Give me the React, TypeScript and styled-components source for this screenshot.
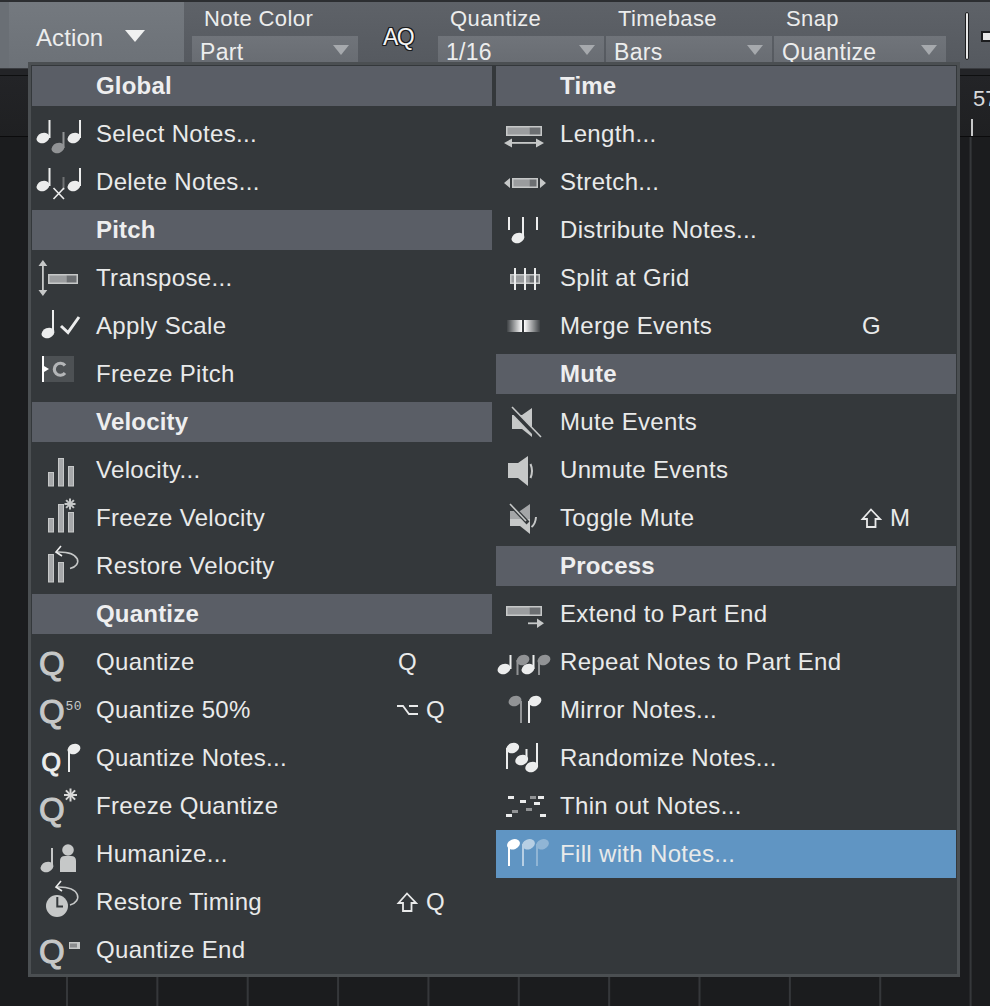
import React from "react";
import styled, { createGlobalStyle } from "styled-components";

const Global = createGlobalStyle`
  html, body { margin: 0; padding: 0; background: #1b1c1e; overflow: hidden; }
  body { font-family: "Liberation Sans", Arial, sans-serif; color: #e9eaea; }
  #root { width: 990px; height: 1006px; }
`;

const Page = styled.div`
  position: relative;
  width: 990px;
  height: 1006px;
  display: flex;
  flex-direction: column;
  overflow: hidden;
  background: #1b1c1e;
  border-top: 2px solid #2c2e31;
  box-sizing: border-box;
`;

const Toolbar = styled.div`
  display: flex;
  height: 67px;
  flex: none;
  background: linear-gradient(#5e6268, #55595f);
  border-bottom: 1px solid #3a3c40;
  box-sizing: border-box;
`;

const ActionButton = styled.div`
  width: 184px;
  flex: none;
  box-sizing: border-box;
  padding: 21px 0 0 27px;
  display: flex;
  align-items: flex-start;
  gap: 22px;
  font-size: 24px;
  line-height: 29px;
  letter-spacing: 0.1px;
  color: #eceded;
  background: linear-gradient(#74797f, #6c7177);
  border-left: 9px solid #6a6f75;
`;

const ActionArrow = styled.span`
  width: 0;
  height: 0;
  margin-top: 7px;
  border-left: 10px solid transparent;
  border-right: 10px solid transparent;
  border-top: 12px solid #f0f1f1;
`;

const FieldGroup = styled.div<{ $wide?: boolean; $first?: boolean }>`
  width: ${(p) => (p.$wide ? 172 : 166)}px;
  margin: 0 2px 0 ${(p) => (p.$first ? 8 : 0)}px;
  flex: none;
`;

const FieldLabel = styled.div`
  height: 34px;
  padding: 3px 0 0 12px;
  box-sizing: border-box;
  font-size: 22px;
  line-height: 27px;
  letter-spacing: 0.4px;
  color: #eceded;
`;

const Field = styled.div`
  height: 32px;
  padding-left: 8px;
  display: flex;
  align-items: center;
  justify-content: space-between;
  background: linear-gradient(#70747a, #676b71);
  font-size: 23px;
  letter-spacing: 0.3px;
  color: #eceded;
  line-height: 30px;
`;

const FieldArrow = styled.span`
  width: 0;
  height: 0;
  margin: 0 9px 4px 0;
  border-left: 8px solid transparent;
  border-right: 8px solid transparent;
  border-top: 10px solid #a6a9ad;
`;

const AQSlot = styled.div`
  width: 80px;
  flex: none;
  margin-left: -2px;
  padding-top: 22px;
  box-sizing: border-box;
  display: flex;
  justify-content: center;
  font-size: 23px;
  font-weight: 400;
  line-height: 26px;
  letter-spacing: -1.5px;
  color: #f4f4f4;
  text-shadow: 1px 0 #1b1c1e, -1px 0 #1b1c1e, 0 1px #1b1c1e, 0 -1px #1b1c1e, 1px 1px #1b1c1e, -1px -1px #1b1c1e, 1px -1px #1b1c1e, -1px 1px #1b1c1e;
`;

const ToolDivider = styled.div`
  width: 2px;
  height: 46px;
  margin: 10px 0 0 17px;
  flex: none;
  background: #e8e8e8;
  border: 1px solid #1c1d1f;
  border-radius: 2px;
`;

const ToolStub = styled.div`
  width: 14px;
  height: 7px;
  margin: 29px 0 0 12px;
  flex: none;
  background: #e8e8e8;
  border: 2px solid #1c1d1f;
`;

const Ruler = styled.div`
  height: 68px;
  flex: none;
  box-sizing: border-box;
  padding: 17px 0 0 971px;
  background: linear-gradient(#232427 0, #232427 6px, #0e0f10 6px, #0e0f10 7px, #232427 7px, #1f2022 100%);
  border-bottom: 1px solid #0b0b0c;
  overflow: hidden;
`;

const RulerMark = styled.div`
  width: 60px;
  padding-left: 2px;
  font-size: 22px;
  line-height: 26px;
  color: #d9dadb;
  white-space: nowrap;
  box-sizing: border-box;
`;

const RulerTick = styled.div`
  width: 2px;
  height: 17px;
  margin-top: 7px;
  background: #c7c8c9;
`;

const Grid = styled.div`
  flex: 1;
  background-color: #1b1c1e;
  background-image: linear-gradient(90deg, #35373a 0, #35373a 2px, transparent 2px);
  background-size: 90.37px 100%;
  background-position: 66px 0;
`;

const Menu = styled.div`
  position: absolute;
  left: 28px;
  top: 60px;
  width: 932px;
  box-sizing: border-box;
  display: flex;
  gap: 4px;
  padding: 1px 1px 0;
  background: #34383b;
  border: 3px solid #4b4f52;
  z-index: 2;
`;

const Column = styled.div`
  width: 460px;
  flex: none;
`;

const Header = styled.div`
  height: 40px;
  margin: 4px 0;
  padding-left: 64px;
  background: #5a5e66;
  font-size: 24px;
  font-weight: 700;
  line-height: 39px;
  letter-spacing: 0.2px;
  color: #eeeeef;
  &:first-child { margin-top: 0; }
`;

const Row = styled.div<{ $active?: boolean }>`
  height: 48px;
  display: grid;
  grid-template-columns: 64px 302px 1fr;
  align-items: center;
  font-size: 24px;
  letter-spacing: 0.33px;
  white-space: nowrap;
  color: #e9eaea;
  background: ${(p) => (p.$active ? "#6095c3" : "transparent")};
`;

const IconSvg = styled.svg`
  display: block;
  width: 64px;
  height: 48px;
`;

const Shortcut = styled.div`
  display: flex;
  align-items: center;
  gap: 8px;
  letter-spacing: 0;
  font-size: 24px;
`;

const ModSvg = styled.svg`
  width: 22px;
  height: 22px;
  margin-left: -2px;
  flex: none;
`;

const LIGHT = "#c6c8c8";
const WHITE = "#eceded";
const GREY = "#919395";

type NoteProps = { hx: number; hy: number; sx: number; y1: number; y2: number; c?: string; o?: number };
const Note = ({ hx, hy, sx, y1, y2, c = WHITE, o = 1 }: NoteProps) => (
  <g opacity={o}>
    <ellipse cx={hx} cy={hy} rx={6.6} ry={5} transform={`rotate(-22 ${hx} ${hy})`} fill={c} />
    <rect x={sx - 1} y={y1} width={2} height={y2 - y1} fill={c} />
  </g>
);

const Bar = ({ x, y, w, h, split }: { x: number; y: number; w: number; h: number; split: number }) => (
  <g>
    <rect x={x} y={y} width={w} height={h} fill={LIGHT} />
    <rect x={x + 1.5} y={y + 1.5} width={split} height={h - 3} fill="#9a9c9e" />
    <rect x={x + 1.5 + split} y={y + 1.5} width={w - 3 - split} height={h - 3} fill="#6c6f72" />
  </g>
);

const Q = ({ x = 7, y = 37, size = 33, c = LIGHT }: { x?: number; y?: number; size?: number; c?: string }) => (
  <text x={x} y={y} fontFamily="'Liberation Sans', sans-serif" fontWeight={400} fontSize={size} fill={c} stroke={c} strokeWidth={1}>Q</text>
);

const BackArrow = ({ d, tx, ty }: { d: string; tx: number; ty: number }) => (
  <g fill="none" stroke={LIGHT} strokeWidth={1.6}>
    <path d={d} />
    <path d={`M${tx + 5} ${ty - 6} L${tx} ${ty} L${tx + 6} ${ty + 4}`} stroke={WHITE} />
  </g>
);

const Star = ({ x, y, r, c = LIGHT }: { x: number; y: number; r: number; c?: string }) => (
  <g stroke={c} strokeWidth={2} strokeLinecap="butt">
    {[0, 45, 90, 135].map((a) => (
      <line key={a} x1={x} y1={y - r} x2={x} y2={y + r} transform={`rotate(${a} ${x} ${y})`} />
    ))}
  </g>
);

const Icon = ({ children }: { children: React.ReactNode }) => (
  <IconSvg viewBox="0 0 64 48">{children}</IconSvg>
);

const icons: Record<string, React.ReactNode> = {
  select: (
    <>
      <Note hx={11} hy={28} sx={17.5} y1={10} y2={28} />
      <Note hx={26} hy={38} sx={31.5} y1={22} y2={38} c={GREY} />
      <Note hx={42} hy={28} sx={48} y1={10} y2={28} />
    </>
  ),
  del: (
    <>
      <Note hx={11} hy={28} sx={17.5} y1={10} y2={28} />
      <rect x={30.5} y={19} width={2} height={13} fill="#6f7173" />
      <path d="M21.5 30 L32 41 M32 30 L21.5 41" stroke={WHITE} strokeWidth={1.6} />
      <Note hx={42} hy={28} sx={48} y1={10} y2={28} />
    </>
  ),
  transpose: (
    <>
      <rect x={10} y={10} width={1.8} height={28} fill={LIGHT} />
      <path d="M6.5 12 L10.9 6 L15.3 12 Z M6.5 36 L10.9 42 L15.3 36 Z" fill={LIGHT} />
      <Bar x={16} y={20} w={30} h={10} split={17} />
    </>
  ),
  scale: (
    <>
      <Note hx={16} hy={31} sx={21} y1={8} y2={31} />
      <path d="M29 24 L36 30.5 L47 15" fill="none" stroke={WHITE} strokeWidth={3} />
    </>
  ),
  freeze: (
    <>
      <rect x={12} y={6} width={30} height={26} fill="#4d5154" />
      <rect x={10} y={6} width={2} height={26} fill="#fff" />
      <path d="M12 16 L17 19 L12 22 Z" fill="#fff" />
      <path d="M33 15.5 A6 6 0 1 0 33 23" fill="none" stroke="#b4b6b8" strokeWidth={3.2} />
    </>
  ),
  velocity: (
    <g fill="#a6a8aa" stroke={LIGHT}>
      <rect x={16.5} y={26.5} width={5} height={13.5} />
      <rect x={26.5} y={12.5} width={5} height={27.5} />
      <rect x={36.5} y={20.5} width={5} height={19.5} />
    </g>
  ),
  freezeVel: (
    <>
      <g fill="#a6a8aa" stroke={LIGHT}>
        <rect x={16.5} y={24.5} width={5} height={13.5} />
        <rect x={26.5} y={10.5} width={5} height={27.5} />
        <rect x={36.5} y={18.5} width={5} height={19.5} />
      </g>
      <Star x={38} y={10} r={5.5} />
    </>
  ),
  restoreVel: (
    <>
      <g fill="#a6a8aa" stroke={LIGHT}>
        <rect x={16.5} y={12.5} width={5} height={27.5} />
        <rect x={26.5} y={20.5} width={5} height={19.5} />
      </g>
      <BackArrow d="M38 26.5 C50 24 50 9 24 10" tx={24} ty={10} />
    </>
  ),
  q: <Q />,
  q50: (
    <>
      <Q />
      <text x={33.5} y={24} fontFamily="'Liberation Mono', monospace" fontWeight={400} fontSize={13} fill={LIGHT}>50</text>
    </>
  ),
  qNotes: (
    <>
      <Q x={9.5} y={37} size={25} c={WHITE} />
      <Note hx={42} hy={15} sx={37} y1={15} y2={38} />
    </>
  ),
  qFreeze: (
    <>
      <Q y={39} />
      <Star x={38.5} y={13} r={6.5} c="#d8d9d9" />
    </>
  ),
  humanize: (
    <>
      <Note hx={15} hy={37} sx={20} y1={18} y2={37} c={LIGHT} />
      <circle cx={36} cy={20} r={5.8} fill={LIGHT} />
      <path d="M28 42 V31 Q28 26 33 26 H39 Q44 26 44 31 V42 Z" fill={LIGHT} />
    </>
  ),
  restoreTime: (
    <>
      <circle cx={25} cy={28} r={11} fill={LIGHT} />
      <path d="M25.3 19 V28.5 H31" fill="none" stroke="#34383b" strokeWidth={2} />
      <BackArrow d="M38 27 C50 24 50 8 24 9" tx={24} ty={9} />
    </>
  ),
  qEnd: (
    <>
      <Q />
      <rect x={37} y={16} width={11} height={7} fill={LIGHT} />
      <rect x={38} y={17.5} width={7} height={4} fill="#8a8c8e" />
    </>
  ),
  length: (
    <>
      <Bar x={10} y={16} w={36} h={10} split={22} />
      <rect x={14} y={32} width={30} height={1.8} fill={LIGHT} />
      <path d="M16 28.5 L8 33 L16 37.5 Z M40 28.5 L48 33 L40 37.5 Z" fill={LIGHT} />
    </>
  ),
  stretch: (
    <>
      <Bar x={16} y={20} w={26} h={10} split={16} />
      <path d="M14 20 L8 25 L14 30 Z M44 20 L50 25 L44 30 Z" fill={LIGHT} />
    </>
  ),
  distribute: (
    <>
      <rect x={12} y={11} width={2} height={13} fill={WHITE} />
      <rect x={40} y={11} width={2} height={13} fill={WHITE} />
      <Note hx={22} hy={32} sx={27} y1={11} y2={32} />
    </>
  ),
  split: (
    <>
      <Bar x={14} y={20} w={30} h={10} split={18} />
      <g fill={WHITE}>
        <rect x={18} y={14} width={2} height={22} />
        <rect x={28} y={14} width={2} height={22} />
        <rect x={38} y={14} width={2} height={22} />
      </g>
    </>
  ),
  merge: (
    <>
      <defs>
        <linearGradient id="mergeL"><stop offset="0" stopColor="#fff" stopOpacity={0.05} /><stop offset="1" stopColor="#fff" /></linearGradient>
        <linearGradient id="mergeR"><stop offset="0" stopColor="#fff" /><stop offset="1" stopColor="#fff" stopOpacity={0.05} /></linearGradient>
      </defs>
      <rect x={11} y={18} width={15} height={12} fill="url(#mergeL)" />
      <rect x={28} y={18} width={16} height={12} fill="url(#mergeR)" />
    </>
  ),
  mute: (
    <>
      <path d="M16 17 H26 L36 10 V39 L26 31 H16 Z" fill={LIGHT} />
      <path d="M14 10 L42 39" stroke="#34383b" strokeWidth={4.5} />
      <path d="M16 9 L45 39" stroke={LIGHT} strokeWidth={1.6} />
    </>
  ),
  unmute: (
    <>
      <path d="M12 17 H22 L32 10 V40 L22 32 H12 Z" fill={LIGHT} />
      <path d="M34.5 18 Q37.5 25 34.5 32" fill="none" stroke={LIGHT} strokeWidth={2} />
    </>
  ),
  toggle: (
    <>
      <path d="M14 17 H24 L34 10 V25 H14 Z" fill="#a4a6a8" />
      <path d="M14 25 H34 V40 L24 32 H14 Z" fill={LIGHT} />
      <path d="M13 9 L32 29" stroke="#34383b" strokeWidth={4} />
      <path d="M14 10 L30 27" stroke={LIGHT} strokeWidth={1.6} />
      <path d="M40 23 Q39.5 30 35.5 33" fill="none" stroke={LIGHT} strokeWidth={2} />
    </>
  ),
  extend: (
    <>
      <Bar x={10} y={16} w={36} h={10} split={22} />
      <rect x={32} y={32.4} width={10} height={1.8} fill={LIGHT} />
      <path d="M41 28.5 L48 33.3 L41 38 Z" fill={LIGHT} />
    </>
  ),
  repeat: (
    <>
      <Note hx={8} hy={31} sx={14.5} y1={17} y2={31} />
      <Note hx={27} hy={22} sx={21.5} y1={22} y2={37} c={GREY} />
      <Note hx={32} hy={31} sx={37.5} y1={17} y2={31} />
      <Note hx={48} hy={22} sx={43} y1={22} y2={37} c={GREY} />
    </>
  ),
  mirror: (
    <>
      <Note hx={19} hy={15} sx={25} y1={15} y2={37} c={GREY} />
      <Note hx={39} hy={15} sx={33} y1={15} y2={37} />
    </>
  ),
  randomize: (
    <>
      <Note hx={16.7} hy={14} sx={11} y1={14} y2={35} />
      <Note hx={25.7} hy={26} sx={30.5} y1={15} y2={26} />
      <Note hx={35.7} hy={33} sx={41} y1={9} y2={33} />
    </>
  ),
  thin: (
    <>
      <g fill={WHITE}>
        {[[12, 14], [24, 18], [42, 14], [38, 20], [10, 32], [44, 32]].map(([x, y]) => (
          <rect key={`${x}-${y}`} x={x} y={y} width={6} height={3} />
        ))}
      </g>
      <g fill={GREY}>
        {[[34, 14], [16, 28], [30, 26]].map(([x, y]) => (
          <rect key={`${x}-${y}`} x={x} y={y} width={6} height={3} />
        ))}
      </g>
    </>
  ),
  fill: (
    <>
      <Note hx={17.5} hy={14.3} sx={13} y1={14} y2={36} c="#fff" />
      <Note hx={32.5} hy={14.3} sx={27} y1={14} y2={36} c="#fff" o={0.55} />
      <Note hx={46.5} hy={14.3} sx={41} y1={14} y2={36} c="#fff" o={0.3} />
    </>
  ),
};

const Option = () => (
  <ModSvg viewBox="0 0 22 22" fill="none" stroke="#e9eaea" strokeWidth={1.8}>
    <path d="M1 7 H7 L13 15 H22 M13 7 H22" />
  </ModSvg>
);

const Shift = () => (
  <ModSvg viewBox="0 0 22 22" fill="none" stroke="#e9eaea" strokeWidth={1.8}>
    <path d="M11 2.5 L20 12 H15.5 V20 H7 V12 H2.5 Z" />
  </ModSvg>
);

type Item = { label: string; icon: string; key?: string; mod?: "opt" | "shift"; active?: boolean };
type Section = { title: string; items: Item[] };

const left: Section[] = [
  { title: "Global", items: [
    { label: "Select Notes...", icon: "select" },
    { label: "Delete Notes...", icon: "del" },
  ] },
  { title: "Pitch", items: [
    { label: "Transpose...", icon: "transpose" },
    { label: "Apply Scale", icon: "scale" },
    { label: "Freeze Pitch", icon: "freeze" },
  ] },
  { title: "Velocity", items: [
    { label: "Velocity...", icon: "velocity" },
    { label: "Freeze Velocity", icon: "freezeVel" },
    { label: "Restore Velocity", icon: "restoreVel" },
  ] },
  { title: "Quantize", items: [
    { label: "Quantize", icon: "q", key: "Q" },
    { label: "Quantize 50%", icon: "q50", key: "Q", mod: "opt" },
    { label: "Quantize Notes...", icon: "qNotes" },
    { label: "Freeze Quantize", icon: "qFreeze" },
    { label: "Humanize...", icon: "humanize" },
    { label: "Restore Timing", icon: "restoreTime", key: "Q", mod: "shift" },
    { label: "Quantize End", icon: "qEnd" },
  ] },
];

const right: Section[] = [
  { title: "Time", items: [
    { label: "Length...", icon: "length" },
    { label: "Stretch...", icon: "stretch" },
    { label: "Distribute Notes...", icon: "distribute" },
    { label: "Split at Grid", icon: "split" },
    { label: "Merge Events", icon: "merge", key: "G" },
  ] },
  { title: "Mute", items: [
    { label: "Mute Events", icon: "mute" },
    { label: "Unmute Events", icon: "unmute" },
    { label: "Toggle Mute", icon: "toggle", key: "M", mod: "shift" },
  ] },
  { title: "Process", items: [
    { label: "Extend to Part End", icon: "extend" },
    { label: "Repeat Notes to Part End", icon: "repeat" },
    { label: "Mirror Notes...", icon: "mirror" },
    { label: "Randomize Notes...", icon: "randomize" },
    { label: "Thin out Notes...", icon: "thin" },
    { label: "Fill with Notes...", icon: "fill", active: true },
  ] },
];

const MenuColumn = ({ sections }: { sections: Section[] }) => (
  <Column>
    {sections.map((s) => (
      <React.Fragment key={s.title}>
        <Header>{s.title}</Header>
        {s.items.map((it) => (
          <Row key={it.label} $active={it.active}>
            <Icon>{icons[it.icon]}</Icon>
            <span>{it.label}</span>
            {it.key ? (
              <Shortcut>
                {it.mod === "opt" && <Option />}
                {it.mod === "shift" && <Shift />}
                {it.key}
              </Shortcut>
            ) : <span />}
          </Row>
        ))}
      </React.Fragment>
    ))}
  </Column>
);

const Select = ({ label, value, wide, first }: { label: string; value: string; wide?: boolean; first?: boolean }) => (
  <FieldGroup $wide={wide} $first={first}>
    <FieldLabel>{label}</FieldLabel>
    <Field>{value}<FieldArrow /></Field>
  </FieldGroup>
);

export default function App() {
  return (
    <Page>
      <Global />
      <Toolbar>
        <ActionButton>Action<ActionArrow /></ActionButton>
        <Select label="Note Color" value="Part" first />
        <AQSlot>AQ</AQSlot>
        <Select label="Quantize" value="1/16" />
        <Select label="Timebase" value="Bars" />
        <Select label="Snap" value="Quantize" wide />
        <ToolDivider />
        <ToolStub />
      </Toolbar>
      <Ruler>
        <RulerMark>57</RulerMark>
        <RulerTick />
      </Ruler>
      <Grid />
      <Menu>
        <MenuColumn sections={left} />
        <MenuColumn sections={right} />
      </Menu>
    </Page>
  );
}
